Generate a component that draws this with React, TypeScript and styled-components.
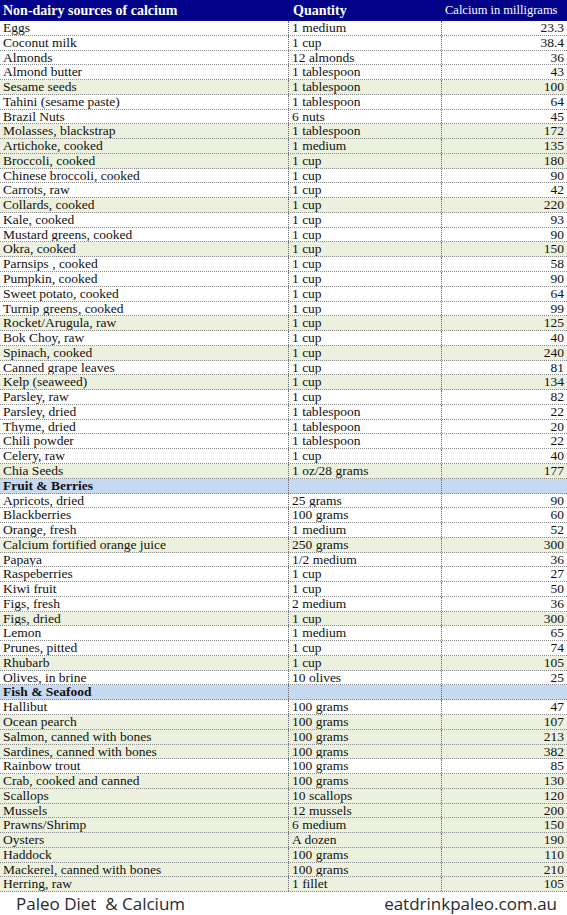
import React from "react";
import styled, { createGlobalStyle } from "styled-components";

const GlobalStyle = createGlobalStyle`
  html, body {
    margin: 0;
    padding: 0;
    background: #ffffff;
  }
  body {
    font-family: "Liberation Serif", "DejaVu Serif", serif;
  }
`;

type Kind = "plain" | "green";

type Item = { name: string; qty: string; mg: string; kind?: Kind };
type Section = { title?: string; items: Item[] };

const g: Kind = "green";

const sections: Section[] = [
  {
    items: [
      { name: "Eggs", qty: "1 medium", mg: "23.3" },
      { name: "Coconut milk", qty: "1 cup", mg: "38.4" },
      { name: "Almonds", qty: "12 almonds", mg: "36" },
      { name: "Almond butter", qty: "1 tablespoon", mg: "43" },
      { name: "Sesame seeds", qty: "1 tablespoon", mg: "100", kind: g },
      { name: "Tahini (sesame paste)", qty: "1 tablespoon", mg: "64" },
      { name: "Brazil Nuts", qty: "6 nuts", mg: "45" },
      { name: "Molasses, blackstrap", qty: "1 tablespoon", mg: "172", kind: g },
      { name: "Artichoke, cooked", qty: "1 medium", mg: "135", kind: g },
      { name: "Broccoli, cooked", qty: "1 cup", mg: "180", kind: g },
      { name: "Chinese broccoli, cooked", qty: "1 cup", mg: "90" },
      { name: "Carrots, raw", qty: "1 cup", mg: "42" },
      { name: "Collards, cooked", qty: "1 cup", mg: "220", kind: g },
      { name: "Kale, cooked", qty: "1 cup", mg: "93" },
      { name: "Mustard greens, cooked", qty: "1 cup", mg: "90" },
      { name: "Okra, cooked", qty: "1 cup", mg: "150", kind: g },
      { name: "Parnsips , cooked", qty: "1 cup", mg: "58" },
      { name: "Pumpkin, cooked", qty: "1 cup", mg: "90" },
      { name: "Sweet potato, cooked", qty: "1 cup", mg: "64" },
      { name: "Turnip greens, cooked", qty: "1 cup", mg: "99" },
      { name: "Rocket/Arugula, raw", qty: "1 cup", mg: "125", kind: g },
      { name: "Bok Choy, raw", qty: "1 cup", mg: "40" },
      { name: "Spinach, cooked", qty: "1 cup", mg: "240", kind: g },
      { name: "Canned grape leaves", qty: "1 cup", mg: "81" },
      { name: "Kelp (seaweed)", qty: "1 cup", mg: "134", kind: g },
      { name: "Parsley, raw", qty: "1 cup", mg: "82" },
      { name: "Parsley, dried", qty: "1 tablespoon", mg: "22" },
      { name: "Thyme, dried", qty: "1 tablespoon", mg: "20" },
      { name: "Chili powder", qty: "1 tablespoon", mg: "22" },
      { name: "Celery, raw", qty: "1 cup", mg: "40" },
      { name: "Chia Seeds", qty: "1 oz/28 grams", mg: "177", kind: g },
    ],
  },
  {
    title: "Fruit & Berries",
    items: [
      { name: "Apricots, dried", qty: "25 grams", mg: "90" },
      { name: "Blackberries", qty: "100 grams", mg: "60" },
      { name: "Orange, fresh", qty: "1 medium", mg: "52" },
      { name: "Calcium fortified orange juice", qty: "250 grams", mg: "300", kind: g },
      { name: "Papaya", qty: "1/2 medium", mg: "36" },
      { name: "Raspeberries", qty: "1 cup", mg: "27" },
      { name: "Kiwi fruit", qty: "1 cup", mg: "50" },
      { name: "Figs, fresh", qty: "2 medium", mg: "36" },
      { name: "Figs, dried", qty: "1 cup", mg: "300", kind: g },
      { name: "Lemon", qty: "1 medium", mg: "65" },
      { name: "Prunes, pitted", qty: "1 cup", mg: "74" },
      { name: "Rhubarb", qty: "1 cup", mg: "105", kind: g },
      { name: "Olives, in brine", qty: "10 olives", mg: "25" },
    ],
  },
  {
    title: "Fish & Seafood",
    items: [
      { name: "Hallibut", qty: "100 grams", mg: "47" },
      { name: "Ocean pearch", qty: "100 grams", mg: "107", kind: g },
      { name: "Salmon, canned with bones", qty: "100 grams", mg: "213", kind: g },
      { name: "Sardines, canned with bones", qty: "100 grams", mg: "382", kind: g },
      { name: "Rainbow trout", qty: "100 grams", mg: "85" },
      { name: "Crab, cooked and canned", qty: "100 grams", mg: "130", kind: g },
      { name: "Scallops", qty: "10 scallops", mg: "120", kind: g },
      { name: "Mussels", qty: "12 mussels", mg: "200", kind: g },
      { name: "Prawns/Shrimp", qty: "6 medium", mg: "150", kind: g },
      { name: "Oysters", qty: "A dozen", mg: "190", kind: g },
      { name: "Haddock", qty: "100 grams", mg: "110", kind: g },
      { name: "Mackerel, canned with bones", qty: "100 grams", mg: "210", kind: g },
      { name: "Herring, raw", qty: "1 fillet", mg: "105", kind: g },
    ],
  },
];

const Page = styled.div`
  width: 567px;
  background: #ffffff;
`;

const Sheet = styled.div`
  display: flex;
  flex-direction: column;
`;

const HeadRow = styled.div`
  display: grid;
  grid-template-columns: 289px 153px 1fr;
  height: 21px;
  align-items: center;
  background: #01018a;
  color: #ffffff;
`;

const HeadCell = styled.div<{ $light?: boolean; $pad?: number }>`
  padding-left: ${(p) => p.$pad ?? 3}px;
  font-family: "Liberation Serif", serif;
  font-size: ${(p) => (p.$light ? "12.5px" : "14px")};
  font-weight: ${(p) => (p.$light ? 400 : 700)};
  white-space: nowrap;
`;

const Row = styled.div<{ $kind: Kind }>`
  display: grid;
  grid-template-columns: 289px 153px 1fr;
  height: 14.78px;
  box-sizing: border-box;
  border-bottom: 1px dotted #8a8a8a;
  background: ${(p) => (p.$kind === "green" ? "#ebf1de" : "#ffffff")};
  font-size: 13.5px;
  line-height: 14px;
  color: #111111;
`;

const Cell = styled.div<{ $num?: boolean; $divider?: boolean }>`
  padding: 0 ${(p) => (p.$num ? "3px" : "0")} 0 ${(p) => (p.$num ? "0" : "3px")};
  text-align: ${(p) => (p.$num ? "right" : "left")};
  border-right: ${(p) => (p.$divider ? "1px dotted #6a6a6a" : "none")};
  white-space: nowrap;
  overflow: hidden;
`;

const SectionRow = styled.div`
  display: grid;
  grid-template-columns: 289px 153px 1fr;
  height: 14.78px;
  box-sizing: border-box;
  border-bottom: 1px dotted #8a8a8a;
  background-color: #c6d9f1;
  background-image: radial-gradient(#b3c8e6 0.6px, transparent 0.7px);
  background-size: 2px 2px;
  font-size: 13.5px;
  line-height: 14px;
  font-weight: 700;
  color: #111111;
`;

const Footer = styled.div`
  display: flex;
  justify-content: space-between;
  align-items: center;
  height: 22px;
  padding: 0 10px 0 16px;
  font-family: "Open Sans", "Lato", sans-serif;
  font-size: 17px;
  color: #2a2a2a;
  white-space: pre;
`;

export default function App() {
  return (
    <Page>
      <GlobalStyle />
      <Sheet>
        <HeadRow>
          <HeadCell>Non-dairy sources of calcium</HeadCell>
          <HeadCell $pad={4}>Quantity</HeadCell>
          <HeadCell $light>Calcium in milligrams</HeadCell>
        </HeadRow>
        {sections.map((s, si) => (
          <React.Fragment key={si}>
            {s.title && (
              <SectionRow>
                <Cell $divider>{s.title}</Cell>
                <Cell $divider />
                <Cell />
              </SectionRow>
            )}
            {s.items.map((it) => (
              <Row key={it.name} $kind={it.kind ?? "plain"}>
                <Cell $divider>{it.name}</Cell>
                <Cell $divider>{it.qty}</Cell>
                <Cell $num>{it.mg}</Cell>
              </Row>
            ))}
          </React.Fragment>
        ))}
      </Sheet>
      <Footer>
        <span>Paleo Diet  &amp; Calcium</span>
        <span>eatdrinkpaleo.com.au</span>
      </Footer>
    </Page>
  );
}
